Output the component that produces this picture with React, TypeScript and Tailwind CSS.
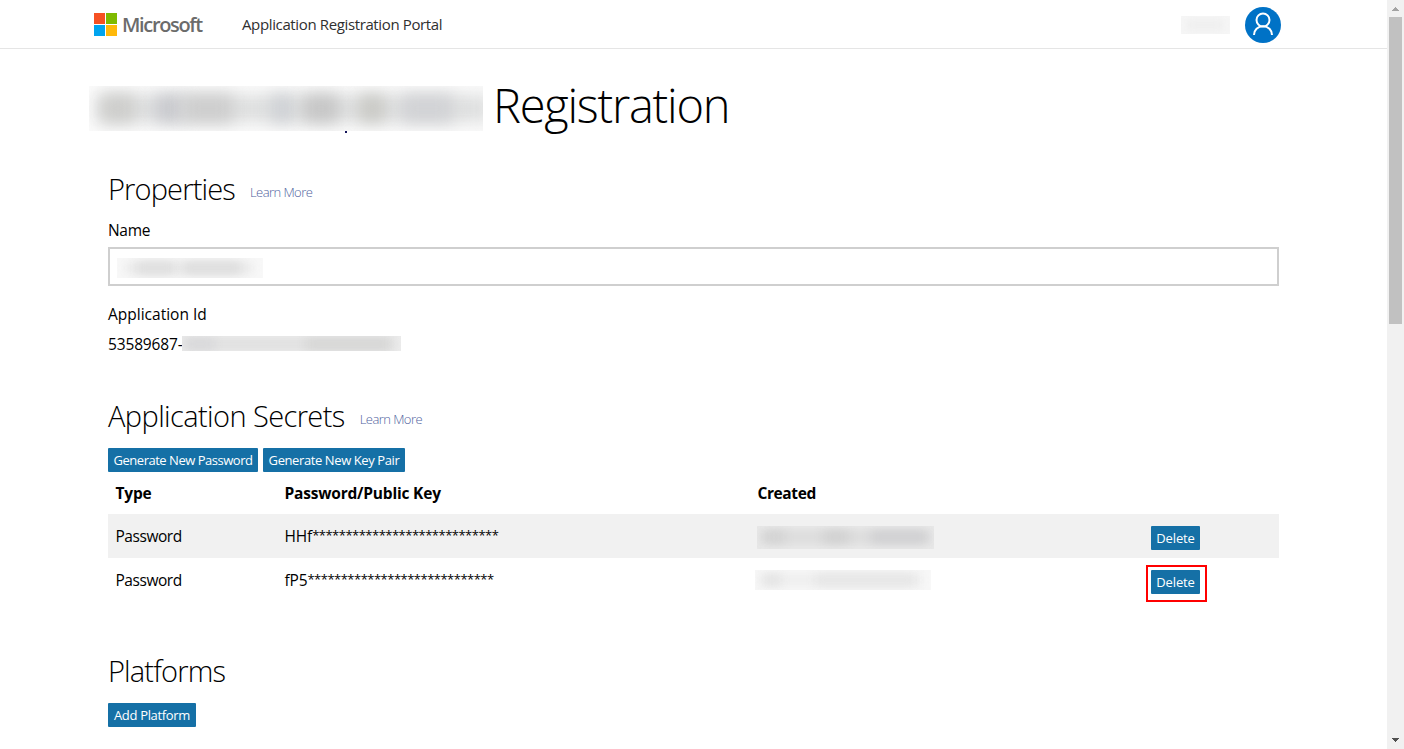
import type { ReactNode } from "react";

type Blob = { left: number; width: number; shade: string };

function Redacted({ className, blobs, inset }: { className: string; blobs: Blob[]; inset: string }) {
  return (
    <div className={`relative shrink-0 overflow-hidden ${className}`}>
      {blobs.map((b, i) => (
        <span
          key={i}
          className={`absolute ${inset}`}
          style={{ left: b.left, width: b.width, backgroundColor: b.shade }}
        />
      ))}
    </div>
  );
}

function Button({ children, className }: { children: ReactNode; className: string }) {
  return (
    <button
      className={`flex h-6 shrink-0 items-center justify-center whitespace-nowrap rounded-[1px] bg-[#1570a6] pb-px text-[13px] font-medium leading-5 text-white ${className}`}
    >
      {children}
    </button>
  );
}

function SectionTitle({ children, className, link }: { children: ReactNode; className: string; link?: boolean }) {
  return (
    <div className="flex h-10 whitespace-nowrap">
      <h2 className={`text-[29px] font-light leading-10 ${className}`}>{children}</h2>
      {link && (
        <a className="pt-[13px] text-[13px] font-light leading-5 tracking-[-0.55px] text-[#4f5f9e]">Learn More</a>
      )}
    </div>
  );
}

function Row({ secret, shaded, children, action }: { secret: string; shaded?: boolean; children: ReactNode; action: ReactNode }) {
  return (
    <div className={`grid h-11 grid-cols-[169px_473px_385px_1fr] pl-2 ${shaded ? "bg-[#f1f1f1]" : ""}`}>
      <div className="-ml-[0.5px] pt-3 text-[15.5px] leading-5 tracking-[-0.45px]">Password</div>
      <div className="-ml-[0.5px] flex pt-3 text-[15.5px] leading-5 tracking-[-0.15px]">
        <span>{secret}</span>
        <span className="-mt-px text-[13px] tracking-[-0.51px]">{"*".repeat(28)}</span>
      </div>
      <div className="pt-3">{children}</div>
      <div className="pt-3">{action}</div>
    </div>
  );
}

function Header() {
  return (
    <header className="flex h-[49px] shrink-0 items-center border-b border-[#e5e5e5] pl-[94px] pr-[106px]">
      <svg width="23" height="23" viewBox="0 0 23 23" shapeRendering="crispEdges">
        <path fill="#f65123" d="M0 0h11v11H0z" />
        <path fill="#7fba00" d="M12 0h11v11H12z" />
        <path fill="#00a4ef" d="M0 12h11v11H0z" />
        <path fill="#ffb90a" d="M12 12h11v11H12z" />
      </svg>
      <span className="ml-[5px] mt-0.5 w-[120px] whitespace-nowrap text-[20px] font-semibold leading-6 tracking-[-1.35px] text-[#6b6b6b]">
        Microsoft
      </span>
      <span className="whitespace-nowrap text-[15px] leading-5 tracking-[-0.37px] text-[#2f2f2f]">
        Application Registration Portal
      </span>
      <Redacted
        className="ml-auto mt-0.5 h-[18px] w-[49px] bg-[#f6f6f6]"
        inset="top-1 h-2.5 blur-[4px]"
        blobs={[{ left: 6, width: 36, shade: "#eeeeee" }]}
      />
      <svg className="ml-[15px] mt-0.5 shrink-0" width="36" height="36" viewBox="0 0 36 36" fill="none">
        <circle cx="18" cy="18" r="18" fill="#0072c6" />
        <circle cx="18" cy="13" r="6.5" stroke="#fff" strokeWidth="2" />
        <path d="M9 28c0-5.200 3.800-8.700 9-8.700s9 3.500 9 8.700" stroke="#fff" strokeWidth="2" />
      </svg>
    </header>
  );
}

function Scrollbar() {
  return (
    <div className="flex w-[17px] shrink-0 flex-col items-center bg-[#f1f1f1]">
      <svg width="17" height="17" viewBox="0 0 17 17" shapeRendering="crispEdges">
        <path d="M5 11h7v-1h-1V9h-1V8H9V7H8v1H7v1H6v1H5z" fill="#a3a3a3" />
      </svg>
      <div className="h-[307px] w-[13px] bg-[#c1c1c1]" />
      <svg className="mt-auto" width="17" height="17" viewBox="0 0 17 17" shapeRendering="crispEdges">
        <path d="M5 6h7v1h-1v1h-1v1H9v1H8V9H7V8H6V7H5z" fill="#505050" />
      </svg>
    </div>
  );
}

export default function App() {
  return (
    <div className="flex h-[749px] w-[1404px] overflow-hidden bg-white font-['Open_Sans','Noto_Sans',sans-serif] text-black">
      <div className="flex min-w-0 flex-1 flex-col">
        <Header />
        <main className="w-[1279px] pl-[108px]">
          <div className="-ml-[19px] flex h-[120px] pt-[37px]">
            <div>
              <Redacted
                className="h-[45px] w-[394px] bg-[#fbfbfb]"
                inset="top-[9px] h-[27px] blur-[8px]"
                blobs={[
                  { left: 8, width: 394, shade: "#dedfdf" },
                  { left: 12, width: 34, shade: "#cdcdcb" },
                  { left: 66, width: 28, shade: "#c9cacf" },
                  { left: 94, width: 50, shade: "#cdcdcd" },
                  { left: 182, width: 22, shade: "#ced1d5" },
                  { left: 214, width: 36, shade: "#c6c6c6" },
                  { left: 270, width: 26, shade: "#c9c9c5" },
                  { left: 312, width: 52, shade: "#d1d2d5" },
                ]}
              />
              <div className="ml-64 h-0.5 w-0.5 bg-[#14145a]" />
            </div>
            <h1 className="-mt-[13px] ml-2.5 whitespace-nowrap text-[47px] font-light leading-[64px] tracking-[-1.25px]">
              Registration
            </h1>
          </div>

          <section className="h-[227px]">
            <SectionTitle link className="mr-[15px] tracking-[-0.85px]">Properties</SectionTitle>
            <div className="mt-[11px] h-5 text-[15.5px] leading-5 tracking-[-0.3px]">Name</div>
            <div className="mt-[7px] h-[39px] border-2 border-[#cfcfcf] pl-[7px] pt-[9px]">
              <Redacted
                className="h-5 w-[146px] bg-[#f8f8f8]"
                inset="top-1 h-3 blur-[5px]"
                blobs={[
                  { left: 8, width: 128, shade: "#eaeaea" },
                  { left: 20, width: 38, shade: "#dedede" },
                  { left: 66, width: 58, shade: "#dddddd" },
                ]}
              />
            </div>
            <div className="mt-[18px] h-5 text-[15.5px] leading-5 tracking-[0px]">Application Id</div>
            <div className="mt-2.5 flex h-5 text-[15.5px] leading-5">
              <span className="w-[74px] whitespace-nowrap tracking-[-0.15px]">53589687-</span>
              <Redacted
                className="mt-0.5 h-[15px] w-[219px] bg-[#ececec]"
                inset="top-0.5 h-3 blur-[5px]"
                blobs={[
                  { left: 2, width: 210, shade: "#e0e0e0" },
                  { left: 4, width: 28, shade: "#d8d8da" },
                  { left: 124, width: 84, shade: "#d6d6d5" },
                ]}
              />
            </div>
          </section>

          <section className="h-[255px]">
            <SectionTitle link className="mr-[15px] tracking-[-0.6px]">Application Secrets</SectionTitle>
            <div className="mt-3 flex gap-[5px]">
              <Button className="w-[150px] tracking-[-0.48px]">Generate New Password</Button>
              <Button className="w-[142px] tracking-[-0.4px]">Generate New Key Pair</Button>
            </div>
            <div className="grid h-[42px] grid-cols-[169px_473px_1fr] pl-[7.5px] pt-[11px] text-[15.5px] font-bold leading-5 tracking-[-0.2px]">
              <div>Type</div>
              <div>Password/Public Key</div>
              <div className="tracking-[-0.4px]">Created</div>
            </div>
            <Row secret="HHf" shaded action={<Button className="ml-2 w-[49px] tracking-[-0.15px]">Delete</Button>}>
              <Redacted
                className="-ml-px h-[23px] w-[177px] bg-[#e9e9e9]"
                inset="top-[5px] h-3 blur-[5px]"
                blobs={[
                  { left: 5, width: 168, shade: "#dbdbdb" },
                  { left: 6, width: 22, shade: "#d3d3d3" },
                  { left: 66, width: 26, shade: "#d1d1d1" },
                  { left: 114, width: 56, shade: "#d0d0d2" },
                ]}
              />
            </Row>
            <Row
              secret="fP5"
              action={
                <div className="-mt-[5px] ml-[3px] h-[37px] w-[61px] border-2 border-[#ff0000] pl-[3px] pt-[3px]">
                  <Button className="w-[49px] tracking-[-0.15px]">Delete</Button>
                </div>
              }
            >
              <Redacted
                className="-ml-[3px] h-5 w-44 bg-[#f8f8f8]"
                inset="top-1 h-3 blur-[5px]"
                blobs={[
                  { left: 5, width: 162, shade: "#eeeeee" },
                  { left: 8, width: 18, shade: "#e4e4e4" },
                  { left: 60, width: 100, shade: "#e6e6e6" },
                ]}
              />
            </Row>
          </section>

          <section>
            <SectionTitle className="tracking-[-0.85px]">Platforms</SectionTitle>
            <div className="mt-3 flex">
              <Button className="w-[88px] tracking-[-0.33px]">Add Platform</Button>
            </div>
          </section>
        </main>
      </div>
      <Scrollbar />
    </div>
  );
}
